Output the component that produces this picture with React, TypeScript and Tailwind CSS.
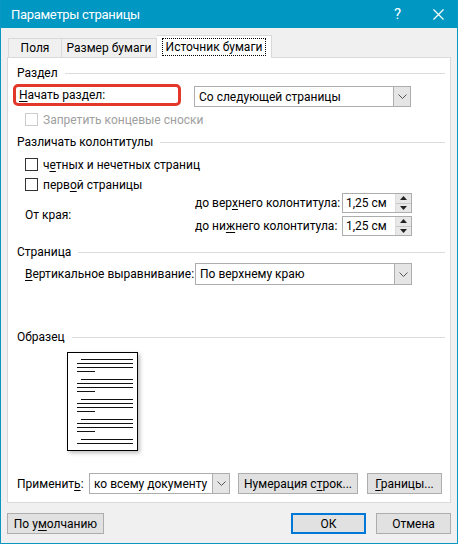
import type { ReactNode } from "react";

const font = { fontFamily: 'Roboto, "Noto Sans", sans-serif' };

function Chevron() {
  return (
    <svg width="9" height="5" viewBox="0 0 9 5" className="block">
      <path d="M0.5 0.5 L4.5 4.5 L8.5 0.5" fill="none" stroke="#555" strokeWidth="1" />
    </svg>
  );
}

function Select({ value, width, height = 22 }: { value: string; width: number; height?: number }) {
  return (
    <div
      className="flex border border-[#adadad] bg-white"
      style={{ width, height }}
    >
      <div className="flex flex-1 items-center whitespace-nowrap pl-[4px] text-black">{value}</div>
      <div className="flex w-[17px] items-center justify-center border-l border-[#adadad] bg-[#e5e5e5]">
        <Chevron />
      </div>
    </div>
  );
}

function GroupHeader({ children }: { children: ReactNode }) {
  return (
    <div className="flex h-[16px] items-center pl-[9px] pr-[5px]">
      <span className="whitespace-nowrap text-black">{children}</span>
      <div className="ml-[7px] h-px flex-1 bg-[#dcdcdc]" />
    </div>
  );
}

function Checkbox({ disabled }: { disabled?: boolean }) {
  return (
    <div
      className={[
        "h-[13px] w-[13px] border bg-white",
        disabled ? "border-[#cccccc]" : "border-[#333333]",
      ].join(" ")}
    />
  );
}

function Spin({ value }: { value: string }) {
  return (
    <div className="flex h-[20px] w-[70px] border border-[#adadad] bg-white">
      <div className="flex flex-1 items-center whitespace-nowrap pl-[3px]">{value}</div>
      <div className="flex w-[16px] flex-col border-l border-[#dcdcdc]">
        <div className="flex flex-1 items-center justify-center bg-[#e8e8e8]">
          <svg width="7" height="4" viewBox="0 0 7 4">
            <path d="M0 4 L3.5 0 L7 4 Z" fill="#222" />
          </svg>
        </div>
        <div className="h-px bg-[#c8c8c8]" />
        <div className="flex flex-1 items-center justify-center bg-[#e8e8e8]">
          <svg width="7" height="4" viewBox="0 0 7 4">
            <path d="M0 0 L3.5 4 L7 0 Z" fill="#222" />
          </svg>
        </div>
      </div>
    </div>
  );
}

function Button({ children, width, primary }: { children: ReactNode; width: number; primary?: boolean }) {
  return (
    <div
      className={[
        "flex h-[21px] items-center justify-center whitespace-nowrap bg-[#e1e1e1] text-black",
        primary ? "border-2 border-[#0078d7]" : "border border-[#adadad]",
      ].join(" ")}
      style={{ width }}
    >
      {children}
    </div>
  );
}

function PagePreview() {
  const paras = [0, 1, 2, 3];
  return (
    <div className="h-[99px] w-[71px] border border-black bg-white shadow-[2px_2px_4px_rgba(0,0,0,0.25)]">
      <svg width="69" height="97" viewBox="0 0 69 97" className="block">
        {paras.map((p) => {
          const y = 6 + p * 20;
          return (
            <g key={p} stroke="#111" strokeWidth="1">
              <line x1="13" y1={y + 0.5} x2="65" y2={y + 0.5} />
              <line x1="9" y1={y + 4.5} x2="65" y2={y + 4.5} />
              <line x1="9" y1={y + 8.5} x2="65" y2={y + 8.5} />
              <line x1="9" y1={y + 12.5} x2="27" y2={y + 12.5} />
            </g>
          );
        })}
        <g stroke="#111" strokeWidth="1">
          <line x1="13" y1="86.5" x2="65" y2="86.5" />
          <line x1="9" y1="90.5" x2="65" y2="90.5" />
        </g>
      </svg>
    </div>
  );
}

export default function App() {
  return (
    <div
      className="flex h-[544px] w-[458px] flex-col border-x border-b border-[#0a97c2] bg-[#f0f0f0] text-[12px] leading-none text-black"
      style={font}
    >
      {/* title bar */}
      <div className="flex h-[28px] shrink-0 items-center bg-[#0097c3] pl-[10px] text-white">
        <span className="text-[13px] tracking-[-0.3px]">Параметры страницы</span>
        <span className="ml-auto mr-[32px] text-[15px]">?</span>
        <svg width="11" height="11" viewBox="0 0 11 11" className="mr-[13px]">
          <path d="M0.5 0.5 L10.5 10.5 M10.5 0.5 L0.5 10.5" stroke="white" strokeWidth="1.2" />
        </svg>
      </div>

      {/* tabs */}
      <div className="relative z-10 mt-[7px] flex h-[22px] items-end pl-[7px]">
        <div className="-mb-px flex h-[20px] w-[53px] items-center justify-center border border-r-0 border-[#d9d9d9] bg-[#f0f0f0]">
          Поля
        </div>
        <div className="-mb-px flex h-[20px] w-[96px] items-center justify-center whitespace-nowrap border border-[#d9d9d9] bg-[#f0f0f0]">
          Размер бумаги
        </div>
        <div className="-mb-px flex h-[23px] w-[115px] items-center justify-center border border-b-0 border-l-0 border-[#d9d9d9] bg-white">
          <span className="whitespace-nowrap border border-dotted border-black px-[3px] py-[2px]">Источник бумаги</span>
        </div>
      </div>

      {/* panel */}
      <div className="mx-[6px] flex h-[446px] flex-col border border-[#d9d9d9] bg-white">
        <div className="mt-[7px]">
          <GroupHeader>Раздел</GroupHeader>
        </div>

        <div className="mt-[3px] flex h-[23px] items-start pl-[5px]">
          <div className="flex h-[22px] w-[168px] items-center rounded-[5px] border-[3px] border-[#e3372c] pl-[3px]">
            <span className="whitespace-nowrap">
              <u className="underline-offset-2">Н</u>ачать раздел:
            </span>
          </div>
          <div className="ml-[13px] mt-[2px]">
            <Select value="Со следующей страницы" width={217} height={21} />
          </div>
        </div>

        <div className="mt-[6px] flex h-[13px] items-center pl-[17px]">
          <Checkbox disabled />
          <span className="ml-[5px] whitespace-nowrap text-[#a0a0a0]">Запретить концевые сноски</span>
        </div>

        <div className="mt-[8px]">
          <GroupHeader>Различать колонтитулы</GroupHeader>
        </div>

        <div className="mt-[8px] flex h-[13px] items-center pl-[17px]">
          <Checkbox />
          <span className="ml-[5px] whitespace-nowrap">
            ч<u className="underline-offset-2">е</u>тных и нечетных страниц
          </span>
        </div>
        <div className="mt-[7px] flex h-[13px] items-center pl-[17px]">
          <Checkbox />
          <span className="ml-[5px] whitespace-nowrap">
            перв<u className="underline-offset-2">о</u>й страницы
          </span>
        </div>

        <div className="mt-[2px] flex h-[43px] items-center pl-[17px]">
          <span className="w-[170px] shrink-0 whitespace-nowrap">От края:</span>
          <div className="flex flex-col gap-[3px]">
            <div className="flex items-center">
              <span className="w-[147px] shrink-0 whitespace-nowrap">
                до вер<u className="underline-offset-2">х</u>него колонтитула:
              </span>
              <Spin value="1,25 см" />
            </div>
            <div className="flex items-center">
              <span className="w-[147px] shrink-0 whitespace-nowrap">
                до ни<u className="underline-offset-2">ж</u>него колонтитула:
              </span>
              <Spin value="1,25 см" />
            </div>
          </div>
        </div>

        <div className="mt-[8px]">
          <GroupHeader>Страница</GroupHeader>
        </div>

        <div className="mt-[3px] flex h-[22px] items-center pl-[17px]">
          <span className="w-[170px] shrink-0 whitespace-nowrap">
            <u className="underline-offset-2">В</u>ертикальное выравнивание:
          </span>
          <Select value="По верхнему краю" width={217} />
        </div>

        <div className="mt-[44px]">
          <GroupHeader>Образец</GroupHeader>
        </div>

        <div className="mt-[7px] pl-[59px]">
          <PagePreview />
        </div>

        <div className="mt-[22px] flex h-[21px] items-center pl-[9px]">
          <span className="w-[72px] shrink-0 whitespace-nowrap">
            Применит<u className="underline-offset-2">ь</u>:
          </span>
          <Select value="ко всему документу" width={141} height={21} />
          <div className="ml-[8px]">
            <Button width={120}>
              <span>
                Нумерация с<u className="underline-offset-2">т</u>рок...
              </span>
            </Button>
          </div>
          <div className="ml-[9px]">
            <Button width={75}>
              <span>
                <u className="underline-offset-2">Г</u>раницы...
              </span>
            </Button>
          </div>
        </div>
      </div>

      {/* bottom buttons */}
      <div className="mt-[10px] flex items-center pl-[6px]">
        <Button width={97}>
          <span>
            По у<u className="underline-offset-2">м</u>олчанию
          </span>
        </Button>
        <div className="ml-auto flex gap-[10px] pr-[6px]">
          <Button width={75} primary>
            ОК
          </Button>
          <Button width={75}>Отмена</Button>
        </div>
      </div>
    </div>
  );
}
